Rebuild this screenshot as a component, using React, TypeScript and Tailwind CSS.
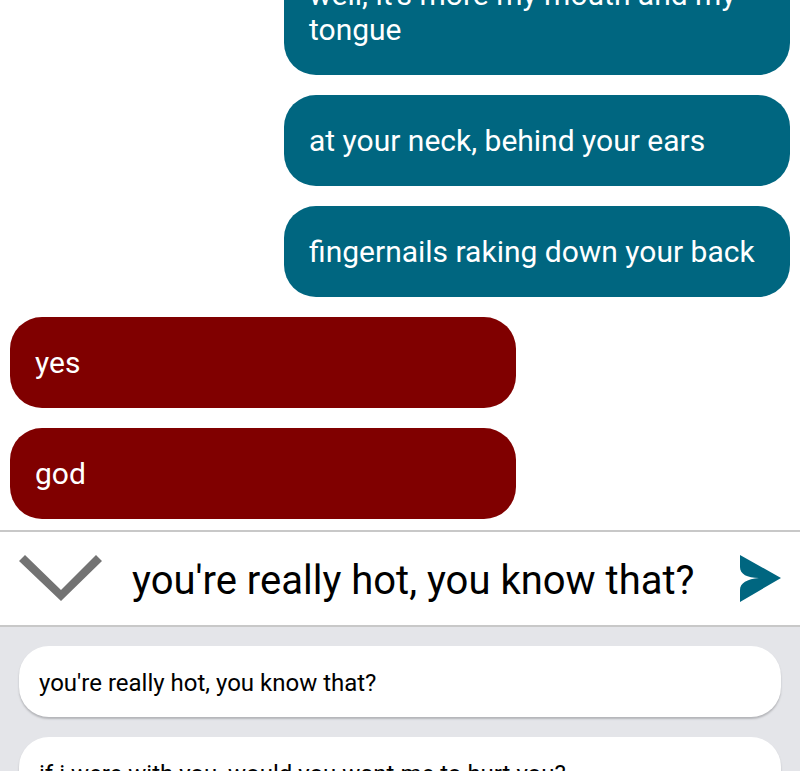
import { useState } from "react";

type Message = { from: "me" | "them"; text: string };

const messages: Message[] = [
  { from: "me", text: "well, it's more my mouth and my tongue" },
  { from: "me", text: "at your neck, behind your ears" },
  { from: "me", text: "fingernails raking down your back" },
  { from: "them", text: "yes" },
  { from: "them", text: "god" },
];

const suggestions = [
  "you're really hot, you know that?",
  "if i were with you, would you want me to hurt you?",
];

function Bubble({ message }: { message: Message }) {
  const side = message.from === "me" ? "self-end bg-[#006680]" : "self-start bg-[#800000]";
  return (
    <li className={`w-[calc(65%-1px)] shrink-0 rounded-[32px] px-[25px] py-7 text-[30px] leading-[35px] text-white ${side}`}>
      {message.text}
    </li>
  );
}

export default function App() {
  const [draft, setDraft] = useState(suggestions[0]);

  return (
    <main className="flex h-screen flex-col overflow-hidden bg-white font-[Roboto,sans-serif]">
      <ul className="flex min-h-0 flex-1 flex-col justify-end gap-5 overflow-hidden px-2.5 pb-[11px]">
        {messages.map((message) => (
          <Bubble key={message.text} message={message} />
        ))}
      </ul>

      <form
        className="flex h-[97px] shrink-0 items-center border-y-2 border-[#c8c8c8] px-[19px]"
        onSubmit={(event) => event.preventDefault()}
      >
        <button type="button" aria-label="Hide suggestions" className="shrink-0">
          <svg className="block" width="84" height="48" viewBox="0 0 84 48" fill="#737373">
            <path d="M0 6 L6 0 L42 35 L77 0 L83 6 L42 46 Z" />
          </svg>
        </button>
        <input
          aria-label="Message"
          className="ml-7 min-w-0 flex-1 bg-transparent pl-px pt-1 text-[40px] text-black outline-none"
          value={draft}
          onChange={(event) => setDraft(event.target.value)}
        />
        <button type="submit" aria-label="Send" className="shrink-0">
          <svg className="block" width="41" height="48" viewBox="0 0 41 48" fill="#006680">
            <path d="M0 0 L41 23 L0 47 V35 C0 28 7 24 19 23 C7 23 0 19 0 12 Z" />
          </svg>
        </button>
      </form>

      <section
        aria-label="Suggestions"
        className="flex h-36 shrink-0 flex-col gap-5 overflow-hidden bg-[#e4e5e9] px-[19px] pt-[19px]"
      >
        {suggestions.map((text) => (
          <button
            key={text}
            type="button"
            className="h-[71px] shrink-0 rounded-[30px] bg-white px-5 pt-0.5 text-left text-[24px] text-black shadow-[0_2px_2px_#b4b5b9]"
            onClick={() => setDraft(text)}
          >
            {text}
          </button>
        ))}
      </section>
    </main>
  );
}
